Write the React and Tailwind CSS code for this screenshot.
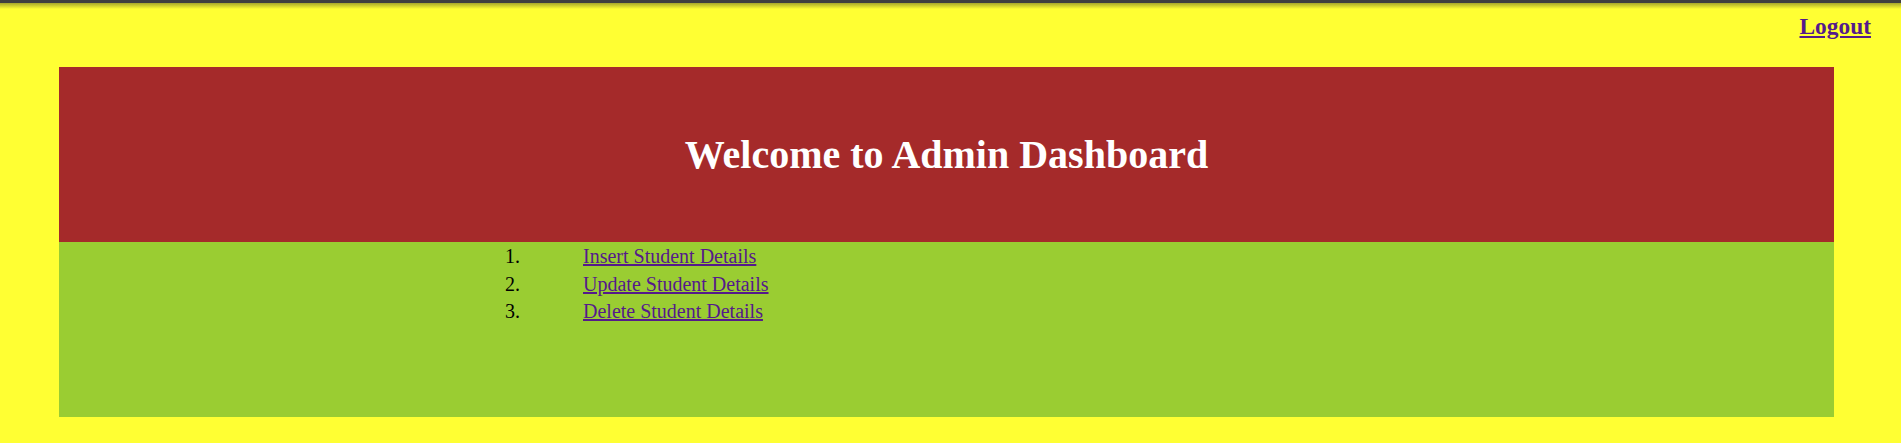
export default function App() {
  const items = ["Insert Student Details", "Update Student Details", "Delete Student Details"];
  return (
    <div className="w-[1901px] h-[443px] bg-[#ffff33] flex flex-col" style={{ fontFamily: '"Liberation Serif", "Times New Roman", serif' }}>
      <div className="h-[3px] bg-[#404040]" />
      <div className="h-[6px] bg-gradient-to-b from-[#a8a82a] to-[#ffff33]" />
      <div className="flex justify-end pr-[30px] pt-[4px] h-[58px]">
        <a href="#" className="text-[23.4px] font-bold underline text-[#551a8b] leading-[27px]">Logout</a>
      </div>
      <div className="mx-[59px] w-[1775px] flex flex-col">
        <div className="h-[175px] bg-[#a52a2a] flex items-center justify-center">
          <h1 className="text-[40px] font-bold text-white leading-[46px]">Welcome to Admin Dashboard</h1>
        </div>
        <div className="h-[175px] bg-[#9acd32] pt-[1px]">
          <ol className="flex flex-col">
            {items.map((t, i) => (
              <li key={t} className="flex text-[20px] leading-[27.5px] text-black">
                <span className="w-[461px] text-right">{i + 1}.</span>
                <a href="#" className="ml-[63px] underline text-[#551a8b]">{t}</a>
              </li>
            ))}
          </ol>
        </div>
      </div>
    </div>
  );
}
